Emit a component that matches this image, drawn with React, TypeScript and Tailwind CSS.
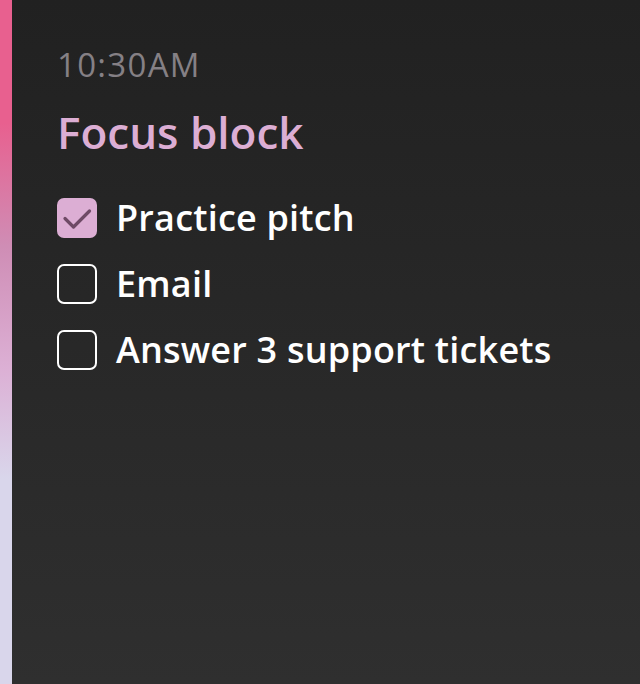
import React from 'react';

const tasks = [
  { label: 'Practice pitch', done: true },
  { label: 'Email', done: false },
  { label: 'Answer 3 support tickets', done: false },
];

const Checkbox = ({ checked }: { checked: boolean }) =>
  checked ? (
    <div className="w-[40px] h-[40px] rounded-[7px] bg-[#dcaed4] shrink-0">
      <svg width="40" height="40" viewBox="0 0 40 40" fill="none">
        <path d="M8 20.5l8.5 8.5 16-16" stroke="#6e4a66" strokeWidth="3.2" strokeLinecap="round" strokeLinejoin="round" />
      </svg>
    </div>
  ) : (
    <div className="w-[40px] h-[40px] rounded-[7px] border-[2.5px] border-white shrink-0" />
  );

export default function App() {
  return (
    <div
      className="w-[640px] h-[684px] flex bg-gradient-to-b from-[#212121] to-[#2f2f2f] overflow-hidden"
      style={{ fontFamily: '"Open Sans", Lato, sans-serif' }}
    >
      {/* accent bar */}
      <div className="w-[12px] h-full shrink-0 bg-[linear-gradient(to_bottom,#e8608f_18%,#cf8db5_36%,#dcb0d5_54%,#d9d6eb_70%)]" />
      <div className="flex-1 pl-[45px] pt-[45px]">
        <div className="text-[33px] leading-[40px] tracking-[1.3px] text-[#858085]">10:30AM</div>
        <div className="mt-[21px] text-[44px] leading-[52px] font-semibold text-[#dcaed4]">Focus block</div>
        <div className="mt-[40px] flex flex-col gap-[26px]">
          {tasks.map((t) => (
            <div key={t.label} className="flex items-center gap-[19px] h-[40px]">
              <Checkbox checked={t.done} />
              <span className="text-[36px] font-semibold text-white leading-none tracking-[0.2px]">{t.label}</span>
            </div>
          ))}
        </div>
      </div>
    </div>
  );
}
